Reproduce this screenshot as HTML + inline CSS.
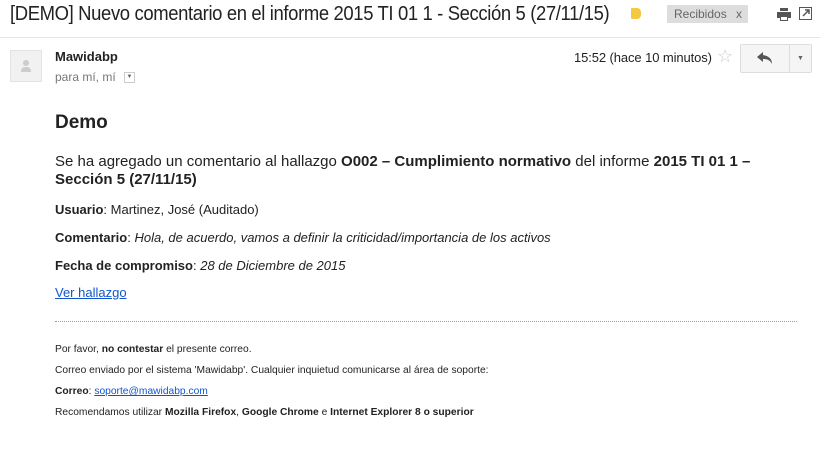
<!DOCTYPE html>
<html><head><meta charset="utf-8"><style>
body{margin:0;width:820px;height:449px;background:#fff;font-family:"Liberation Sans",Arial,sans-serif;color:#222;position:relative;overflow:hidden}
.a{position:absolute;white-space:nowrap}
b{font-weight:bold}
a{color:#15c;text-decoration:underline}
</style></head><body>
<div class="a" style="left:10px;top:3px;font-size:20px;letter-spacing:-0.4px;color:#222;transform:scaleX(0.923);transform-origin:0 0">[DEMO] Nuevo comentario en el informe 2015 TI 01 1 - Sección 5 (27/11/15)</div>
<div class="a" style="left:631px;top:8px;width:10px;height:11px;background:#f5c842;border-radius:1px 4px 4px 1px"></div>
<div class="a" style="left:667px;top:5px;width:81px;height:18px;background:#ddd;font-size:12px;color:#666;line-height:18px"><span style="margin-left:7px">Recibidos</span><span style="position:absolute;left:69px">x</span></div>
<svg class="a" style="left:777px;top:8px" width="14" height="13" viewBox="0 0 14 13"><rect x="3" y="0" width="8" height="3" fill="#555"/><rect x="0" y="4" width="14" height="6" fill="#555"/><rect x="3" y="8" width="8" height="5" fill="#555"/><rect x="4" y="9" width="6" height="3" fill="#fff"/></svg>
<svg class="a" style="left:799px;top:7px" width="13" height="13" viewBox="0 0 13 13"><rect x="0.5" y="0.5" width="12" height="12" fill="none" stroke="#555"/><path d="M4 9L10 3M6 3h4v4" stroke="#555" fill="none" stroke-width="1.5"/></svg>
<div class="a" style="left:0;top:37px;width:820px;height:1px;background:#e5e5e5"></div>
<div class="a" style="left:10px;top:50px;width:32px;height:32px;background:#f1f1f1;border:1px solid #e3e3e3;box-sizing:border-box"></div>
<svg class="a" style="left:20px;top:59px" width="12" height="14" viewBox="0 0 12 14"><circle cx="6" cy="4" r="3" fill="#ccc"/><path d="M1 13c0-4 2-5 5-5s5 1 5 5z" fill="#ccc"/></svg>
<div class="a" style="left:55px;top:49px;font-size:13px;font-weight:bold;color:#222">Mawidabp</div>
<div class="a" style="left:55px;top:70px;font-size:12px;color:#777">para mí, mí</div>
<div class="a" style="left:124px;top:72px;width:11px;height:11px;border:1px solid #ccc;box-sizing:border-box;font-size:6px;color:#666;text-align:center;line-height:9px">▼</div>
<div class="a" style="left:574px;top:50px;font-size:13px;color:#222;letter-spacing:-0.1px">15:52 (hace 10 minutos)</div>
<div class="a" style="left:717px;top:46px;font-size:18px;color:#ccc">☆</div>
<div class="a" style="left:740px;top:44px;width:72px;height:29px;border:1px solid #ddd;background:#f5f5f5;box-sizing:border-box;border-radius:2px"></div>
<div class="a" style="left:789px;top:44px;width:1px;height:29px;background:#ddd"></div>
<svg class="a" style="left:757px;top:52px" width="16" height="12" viewBox="0 0 16 12"><path d="M6 0L0 5l6 5V7c4 0 7 1 9 5 0-5-3-8-9-9z" fill="#555"/></svg>
<div class="a" style="left:797px;top:55px;font-size:7px;color:#666">▼</div>
<div class="a" style="left:55px;top:112px;font-size:19px;font-weight:bold;color:#222">Demo</div>
<div class="a" style="left:55px;top:153px;font-size:15px;line-height:18px;white-space:normal;width:730px;color:#222">Se ha agregado un comentario al hallazgo <b>O002 – Cumplimiento normativo</b> del informe <b>2015 TI 01 1 – Sección 5 (27/11/15)</b></div>
<div class="a" style="left:55px;top:202px;font-size:13px"><b>Usuario</b>: Martinez, José (Auditado)</div>
<div class="a" style="left:55px;top:230px;font-size:13px"><b>Comentario</b>: <i>Hola, de acuerdo, vamos a definir la criticidad/importancia de los activos</i></div>
<div class="a" style="left:55px;top:258px;font-size:13px"><b>Fecha de compromiso</b>: <i>28 de Diciembre de 2015</i></div>
<div class="a" style="left:55px;top:285px;font-size:13px"><a>Ver hallazgo</a></div>
<div class="a" style="left:55px;top:321px;width:742px;border-top:1px dotted #999"></div>
<div class="a" style="left:55px;top:344px;font-size:10.25px">Por favor, <b>no contestar</b> el presente correo.</div>
<div class="a" style="left:55px;top:365px;font-size:10.25px">Correo enviado por el sistema 'Mawidabp'. Cualquier inquietud comunicarse al área de soporte:</div>
<div class="a" style="left:55px;top:386px;font-size:10.25px"><b>Correo</b>: <a>soporte@mawidabp.com</a></div>
<div class="a" style="left:55px;top:407px;font-size:10.25px">Recomendamos utilizar <b>Mozilla Firefox</b>, <b>Google Chrome</b> e <b>Internet Explorer 8 o superior</b></div>
</body></html>
